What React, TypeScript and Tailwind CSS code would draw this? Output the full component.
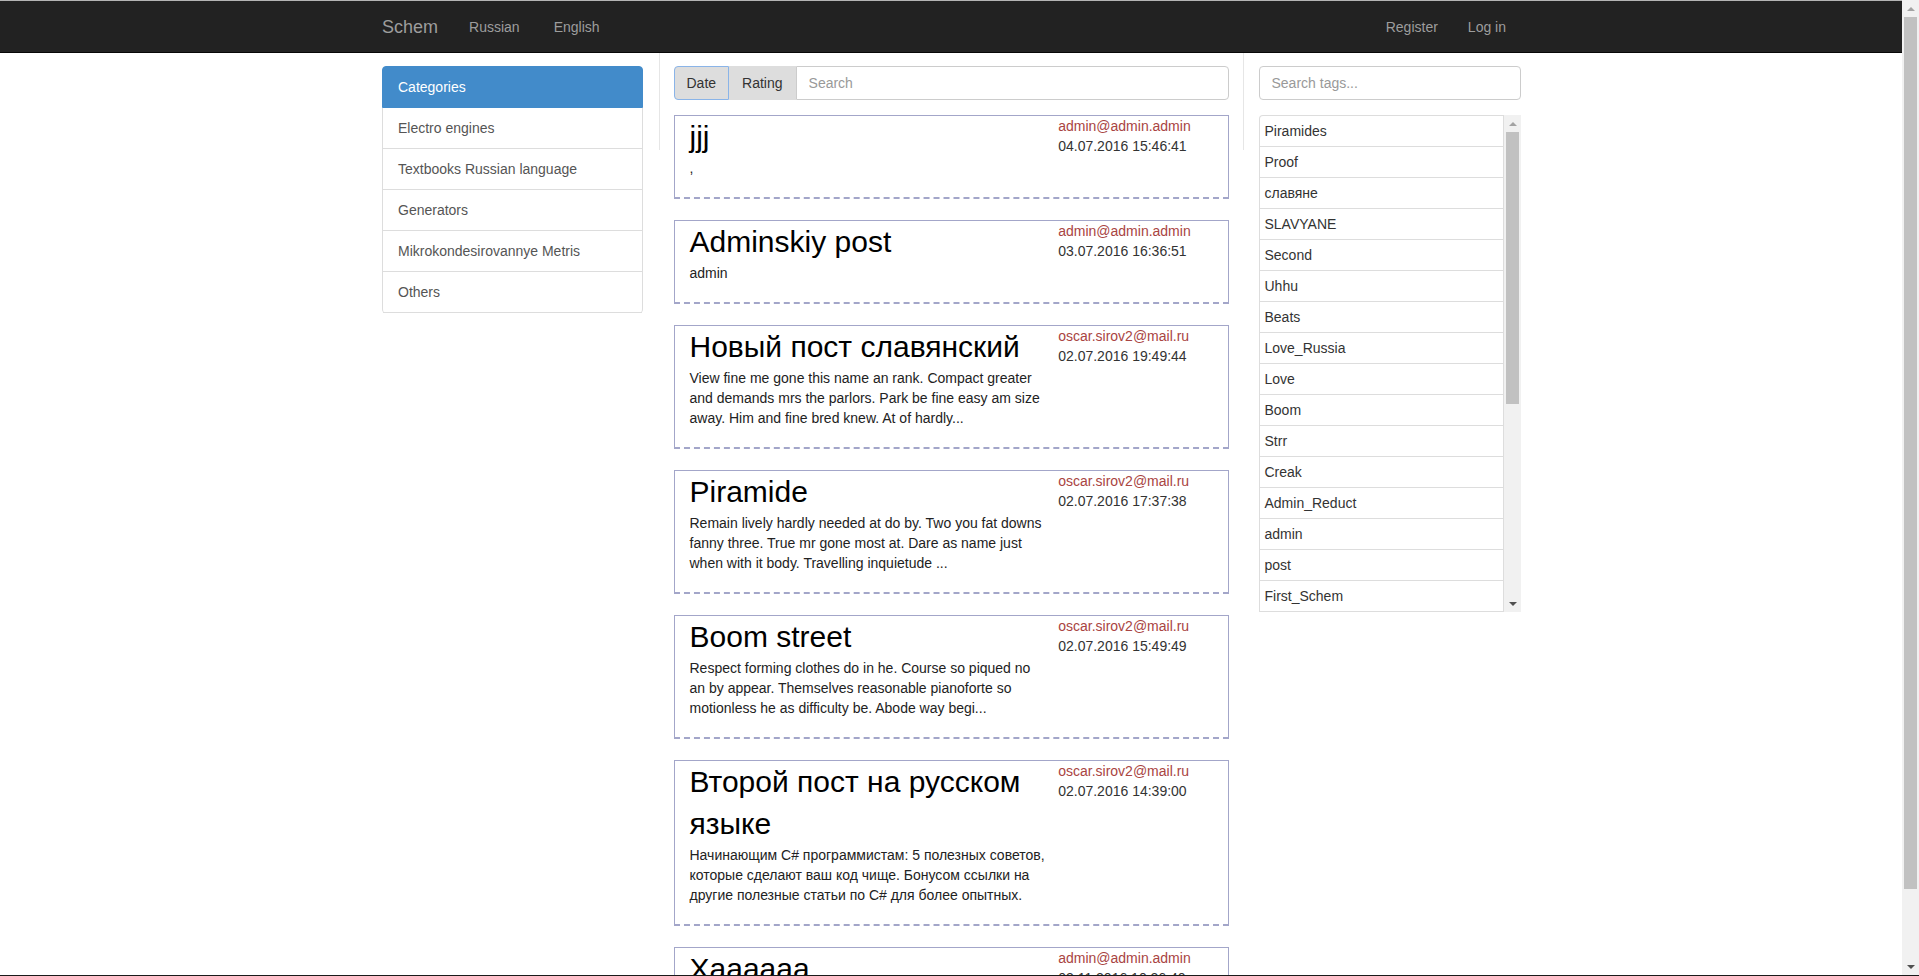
import React from 'react';

type Post = {
  title: string[];
  body: string[];
  author: string;
  date: string;
};

const posts: Post[] = [
  { title: ['jjj'], body: [','], author: 'admin@admin.admin', date: '04.07.2016 15:46:41' },
  { title: ['Adminskiy post'], body: ['admin'], author: 'admin@admin.admin', date: '03.07.2016 16:36:51' },
  {
    title: ['Новый пост славянский'],
    body: [
      'View fine me gone this name an rank. Compact greater',
      'and demands mrs the parlors. Park be fine easy am size',
      'away. Him and fine bred knew. At of hardly...',
    ],
    author: 'oscar.sirov2@mail.ru',
    date: '02.07.2016 19:49:44',
  },
  {
    title: ['Piramide'],
    body: [
      'Remain lively hardly needed at do by. Two you fat downs',
      'fanny three. True mr gone most at. Dare as name just',
      'when with it body. Travelling inquietude ...',
    ],
    author: 'oscar.sirov2@mail.ru',
    date: '02.07.2016 17:37:38',
  },
  {
    title: ['Boom street'],
    body: [
      'Respect forming clothes do in he. Course so piqued no',
      'an by appear. Themselves reasonable pianoforte so',
      'motionless he as difficulty be. Abode way begi...',
    ],
    author: 'oscar.sirov2@mail.ru',
    date: '02.07.2016 15:49:49',
  },
  {
    title: ['Второй пост на русском', 'языке'],
    body: [
      'Начинающим C# программистам: 5 полезных советов,',
      'которые сделают ваш код чище. Бонусом ссылки на',
      'другие полезные статьи по C# для более опытных.',
    ],
    author: 'oscar.sirov2@mail.ru',
    date: '02.07.2016 14:39:00',
  },
  { title: ['Xaaaaaa'], body: ['xaxa'], author: 'admin@admin.admin', date: '03.11.2016 10:26:40' },
];

const categories = [
  'Electro engines',
  'Textbooks Russian language',
  'Generators',
  'Mikrokondesirovannye Metris',
  'Others',
];

const tags = [
  'Piramides',
  'Proof',
  'славяне',
  'SLAVYANE',
  'Second',
  'Uhhu',
  'Beats',
  'Love_Russia',
  'Love',
  'Boom',
  'Strr',
  'Creak',
  'Admin_Reduct',
  'admin',
  'post',
  'First_Schem',
  'Test',
  'Xaaaaaa',
];

function UpArrow({ color }: { color: string }) {
  return (
    <div className="flex h-[17px] items-center justify-center">
      <div
        className="h-0 w-0 border-x-[4px] border-b-[4px] border-x-transparent"
        style={{ borderBottomColor: color }}
      />
    </div>
  );
}

function DownArrow({ color }: { color: string }) {
  return (
    <div className="flex h-[17px] items-center justify-center">
      <div
        className="h-0 w-0 border-x-[4px] border-t-[4px] border-x-transparent"
        style={{ borderTopColor: color }}
      />
    </div>
  );
}

function Navbar() {
  return (
    <div className="h-[52px] border-b border-[#080808] bg-[#222]">
      <div className="mx-auto flex h-full w-[1170px] items-center justify-between px-[15px] text-[#9d9d9d]">
        <div className="flex items-center">
          <span className="ml-px text-[18px]">Schem</span>
          <span className="ml-[31px]">Russian</span>
          <span className="ml-[34px]">English</span>
        </div>
        <div className="mr-[15px] flex items-center gap-[30px]">
          <span>Register</span>
          <span>Log in</span>
        </div>
      </div>
    </div>
  );
}

function Categories() {
  return (
    <div className="w-[292.5px] shrink-0 pl-[16px] pr-[16px] pt-[13px]">
      <div className="flex h-[42px] items-center rounded-t-[4px] border border-[#428bca] bg-[#428bca] px-[15px] text-white">
        Categories
      </div>
      <div className="rounded-b-[4px] border-x border-[#ddd]">
        {categories.map((c) => (
          <div key={c} className="flex h-[41px] items-center border-b border-[#ddd] px-[15px] text-[#555]">
            {c}
          </div>
        ))}
      </div>
    </div>
  );
}

function PostCard({ post }: { post: Post }) {
  return (
    <div className="mb-[21px] flex border border-b-2 border-[#a3a6c9] px-[15px] pb-[19px] [border-bottom-style:dashed]">
      <div className="w-[338.7px] shrink-0">
        {post.title.map((t) => (
          <div key={t} className="whitespace-nowrap text-[30px] leading-[42px] text-black">
            {t}
          </div>
        ))}
        {post.body.map((b) => (
          <div key={b} className="whitespace-nowrap text-[#222]">
            {b}
          </div>
        ))}
      </div>
      <div className="ml-[30px] whitespace-nowrap">
        <div className="text-[#a94442]">{post.author}</div>
        <div className="text-[#333]">{post.date}</div>
      </div>
    </div>
  );
}

function Feed() {
  return (
    <div className="flex w-[585px] shrink-0">
      <div className="h-[97px] w-px shrink-0 bg-[#e6e6e6]" />
      <div className="min-w-0 flex-1 px-[14px] pt-[13px]">
        <div className="flex h-[34px]">
          <button
            type="button"
            className="rounded-l-[4px] border border-[#8ab4e8] bg-[#ddd] px-3 text-[#333]"
          >
            Date
          </button>
          <button type="button" className="bg-[#ddd] px-[13px] text-[#333]">
            Rating
          </button>
          <input
            className="min-w-0 flex-1 rounded-r-[4px] border border-[#ccc] px-3 outline-none placeholder:text-[#999]"
            placeholder="Search"
          />
        </div>
        <div className="mt-[15px]">
          {posts.map((p, i) => (
            <PostCard key={i} post={p} />
          ))}
        </div>
      </div>
      <div className="h-[97px] w-px shrink-0 bg-[#e6e6e6]" />
    </div>
  );
}

function Tags() {
  return (
    <div className="w-[292.5px] shrink-0 px-[15px] pt-[13px]">
      <input
        className="h-[34px] w-full rounded-[4px] border border-[#ccc] px-3 outline-none placeholder:text-[#999]"
        placeholder="Search tags..."
      />
      <div className="mt-[15px] flex h-[497px]">
        <div className="min-w-0 flex-1 overflow-hidden rounded-tl-[4px] border-x border-t border-[#ddd]">
          {tags.map((t) => (
            <div key={t} className="h-[31px] border-b border-[#ddd] pl-[5px] leading-[30px] text-[#333]">
              {t}
            </div>
          ))}
        </div>
        <div className="flex w-[17px] shrink-0 flex-col bg-[#f1f1f1]">
          <UpArrow color="#a3a3a3" />
          <div className="ml-[2px] h-[272px] w-[13px] bg-[#c1c1c1]" />
          <div className="flex-1" />
          <DownArrow color="#505050" />
        </div>
      </div>
    </div>
  );
}

function App() {
  return (
    <div className="flex h-screen w-full flex-col overflow-hidden bg-white font-['Liberation_Sans',Arial,sans-serif] text-[14px] leading-5 text-[#333]">
      <div className="flex min-h-0 flex-1">
        <div className="min-w-0 flex-1 overflow-hidden">
          <div className="h-px bg-[#b4b4b4]" />
          <Navbar />
          <div className="mx-auto flex w-[1170px]">
            <Categories />
            <Feed />
            <Tags />
          </div>
        </div>
        <div className="flex w-[17px] shrink-0 flex-col bg-[#f1f1f1]">
          <UpArrow color="#a3a3a3" />
          <div className="ml-[2px] h-[872px] w-[13px] bg-[#c1c1c1]" />
          <div className="flex-1" />
          <DownArrow color="#505050" />
        </div>
      </div>
      <div className="h-px bg-[#1a1a1a]" />
    </div>
  );
}

export default App;
